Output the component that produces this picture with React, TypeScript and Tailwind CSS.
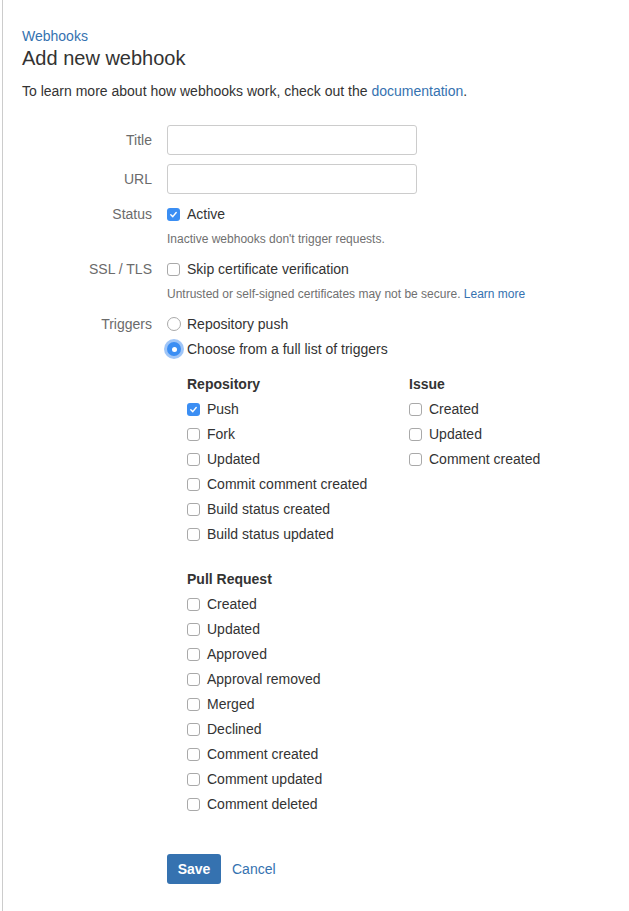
import React from "react";

function Check({ checked = false }: { checked?: boolean }) {
  return checked ? (
    <span className="flex h-[13px] w-[13px] shrink-0 items-center justify-center rounded-[3px] bg-[#3b8ef3]">
      <svg width="9" height="9" viewBox="0 0 10 10" fill="none">
        <path d="M2 5.3 L4.2 7.4 L8 2.8" stroke="white" strokeWidth="1.6" strokeLinecap="round" strokeLinejoin="round" />
      </svg>
    </span>
  ) : (
    <span className="block h-[13px] w-[13px] shrink-0 rounded-[3px] border border-[#a9a9a9] bg-white" />
  );
}

function Radio({ checked = false }: { checked?: boolean }) {
  return checked ? (
    <span className="flex h-[14px] w-[14px] shrink-0 items-center justify-center rounded-full bg-[#3b8ef3] shadow-[0_0_0_3px_rgba(80,150,240,0.55)]">
      <span className="block h-[5px] w-[5px] rounded-full bg-white" />
    </span>
  ) : (
    <span className="block h-[14px] w-[14px] shrink-0 rounded-full border border-[#a9a9a9] bg-white" />
  );
}

function Item({ label, checked = false }: { label: string; checked?: boolean }) {
  return (
    <div className="flex h-[20px] items-center gap-[7px]">
      <Check checked={checked} />
      <span>{label}</span>
    </div>
  );
}

function Row({ label, children, className = "" }: { label: string; children: React.ReactNode; className?: string }) {
  return (
    <div className={"flex " + className}>
      <div className="w-[145px] shrink-0 pr-[15px] text-right text-[#6b6b6b]">{label}</div>
      <div className="flex-1">{children}</div>
    </div>
  );
}

export default function App() {
  const repo = ["Push", "Fork", "Updated", "Commit comment created", "Build status created", "Build status updated"];
  const issue = ["Created", "Updated", "Comment created"];
  const pr = ["Created", "Updated", "Approved", "Approval removed", "Merged", "Declined", "Comment created", "Comment updated", "Comment deleted"];
  return (
    <div className="min-h-[911px] bg-white pl-[2px]">
      <div className="min-h-[911px] border-l border-[#cccccc] pl-[19px] pt-[26px] font-['Liberation_Sans',Arial,sans-serif] text-[14px] leading-[20px] text-[#333333]">
        <a className="block text-[#3572b0]">Webhooks</a>
        <h1 className="text-[20px] leading-[24px] text-[#333333]">Add new webhook</h1>
        <p className="mt-[11px]">
          To learn more about how webhooks work, check out the <a className="text-[#3572b0]">documentation</a>.
        </p>

        <div className="mt-[24px] flex flex-col">
          <div className="flex items-center">
            <div className="w-[145px] shrink-0 pr-[15px] text-right text-[#6b6b6b]">Title</div>
            <div className="h-[30px] w-[250px] rounded-[3px] border border-[#cccccc] bg-white" />
          </div>
          <div className="mt-[9px] flex items-center">
            <div className="w-[145px] shrink-0 pr-[15px] text-right text-[#6b6b6b]">URL</div>
            <div className="h-[30px] w-[250px] rounded-[3px] border border-[#cccccc] bg-white" />
          </div>

          <Row label="Status" className="mt-[10px]">
            <Item label="Active" checked />
            <div className="mt-[5px] text-[12px] leading-[20px] text-[#707070]">Inactive webhooks don't trigger requests.</div>
          </Row>

          <Row label="SSL / TLS" className="mt-[10px]">
            <Item label="Skip certificate verification" />
            <div className="mt-[5px] text-[12px] leading-[20px] text-[#707070]">
              Untrusted or self-signed certificates may not be secure. <a className="text-[#3572b0]">Learn more</a>
            </div>
          </Row>

          <Row label="Triggers" className="mt-[10px]">
            <div className="flex h-[20px] items-center gap-[6px]">
              <Radio />
              <span>Repository push</span>
            </div>
            <div className="mt-[5px] flex h-[20px] items-center gap-[6px]">
              <Radio checked />
              <span>Choose from a full list of triggers</span>
            </div>

            <div className="mt-[15px] pl-[20px]">
              <div className="flex">
                <div className="w-[222px]">
                  <div className="font-bold">Repository</div>
                  <div className="mt-[5px] flex flex-col gap-[5px]">
                    {repo.map((r, i) => (
                      <Item key={r} label={r} checked={i === 0} />
                    ))}
                  </div>
                </div>
                <div>
                  <div className="font-bold">Issue</div>
                  <div className="mt-[5px] flex flex-col gap-[5px]">
                    {issue.map((r) => (
                      <Item key={r} label={r} />
                    ))}
                  </div>
                </div>
              </div>

              <div className="mt-[25px] font-bold">Pull Request</div>
              <div className="mt-[5px] flex flex-col gap-[5px]">
                {pr.map((r) => (
                  <Item key={r} label={r} />
                ))}
              </div>
            </div>

            <div className="mt-[40px] flex items-center gap-[11px]">
              <button className="h-[30px] w-[54px] rounded-[3px] bg-[#3572b0] font-bold text-white">Save</button>
              <a className="text-[#3572b0]">Cancel</a>
            </div>
          </Row>
        </div>
      </div>
    </div>
  );
}
